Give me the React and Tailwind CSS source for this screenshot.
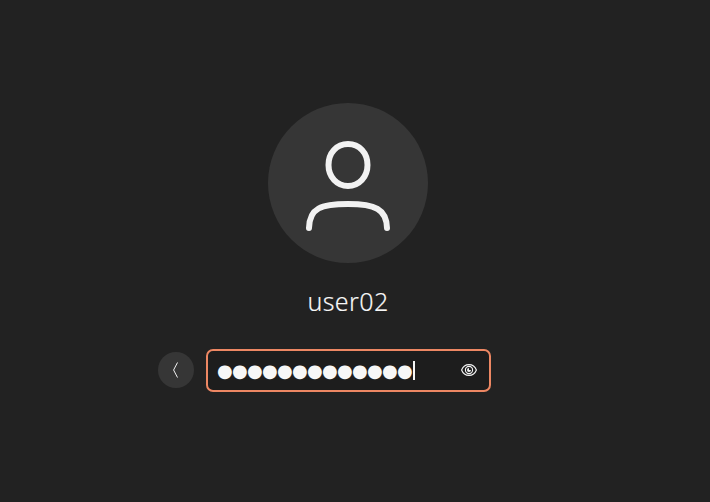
function Avatar() {
  return (
    <div className="h-[160px] w-[160px] rounded-full bg-[#363636]">
      <svg viewBox="0 0 160 160" className="h-full w-full" fill="none" stroke="#f2f2f2" strokeWidth="6" strokeLinecap="round">
        <path d="M80 41C91.5 41 99.5 50 99.5 62C99.5 74 91 83 80 83C69 83 60.5 74 60.5 62C60.5 50 68.5 41 80 41Z" />
        <path d="M41 125C41.5 105 53 101 80 101C107 101 118.500 106 119 125" />
      </svg>
    </div>
  );
}

function EyeIcon() {
  return (
    <svg viewBox="0 0 16 12" className="block h-3 w-4" fill="none" stroke="#f2f2f2" strokeWidth="1.15">
      <path d="M.6 6C2 2.400 4.600.6 8 .6S14 2.400 15.400 6C14 9.600 11.400 11.400 8 11.400S2 9.600.6 6Z" />
      <circle cx="8" cy="6" r="3.600" />
      <path d="M8 4V6H10A2 2 0 1 1 8 4Z" fill="#f2f2f2" stroke="none" />
    </svg>
  );
}

export default function App() {
  return (
    <main className="flex h-[502px] w-[710px] flex-col items-start overflow-hidden bg-[#222222] pt-[103px] text-[#f7f7f7]">
      <section className="ml-[158px] flex w-[380px] flex-col items-center">
        <Avatar />
        <h1 className="mt-5 h-9 whitespace-nowrap font-['Noto_Sans',sans-serif] text-[25px] leading-9 font-light tracking-[0.4px] [-webkit-text-stroke:0.15px_#f7f7f7]">user02</h1>
      </section>
      <form className="mt-[30px] ml-[158px] flex h-[43px] items-start gap-3">
        <button type="button" aria-label="Back" className="mt-[3px] flex h-9 w-9 items-center justify-center rounded-full bg-[#363636]">
          <svg viewBox="0 0 6 16" className="h-4 w-[6px]" fill="none" stroke="#f2f2f2">
            <path d="M4.500 .5L.6 8L4.500 15.500" />
          </svg>
        </button>
        <div className="flex h-[43px] w-[285px] items-center rounded-[7px] border-2 border-[#ed8763] bg-[#1d1d1d] pr-3 pb-px pl-[9px]">
          <span className="w-[196px] whitespace-nowrap pt-[2px] font-['DejaVu_Sans',sans-serif] text-[18px] leading-[30px] tracking-[-0.714px]">●●●●●●●●●●●●●</span>
          <span className="h-[19px] w-[2px] bg-[#f7f7f7]" />
          <span className="ml-auto"><EyeIcon /></span>
        </div>
      </form>
    </main>
  );
}
